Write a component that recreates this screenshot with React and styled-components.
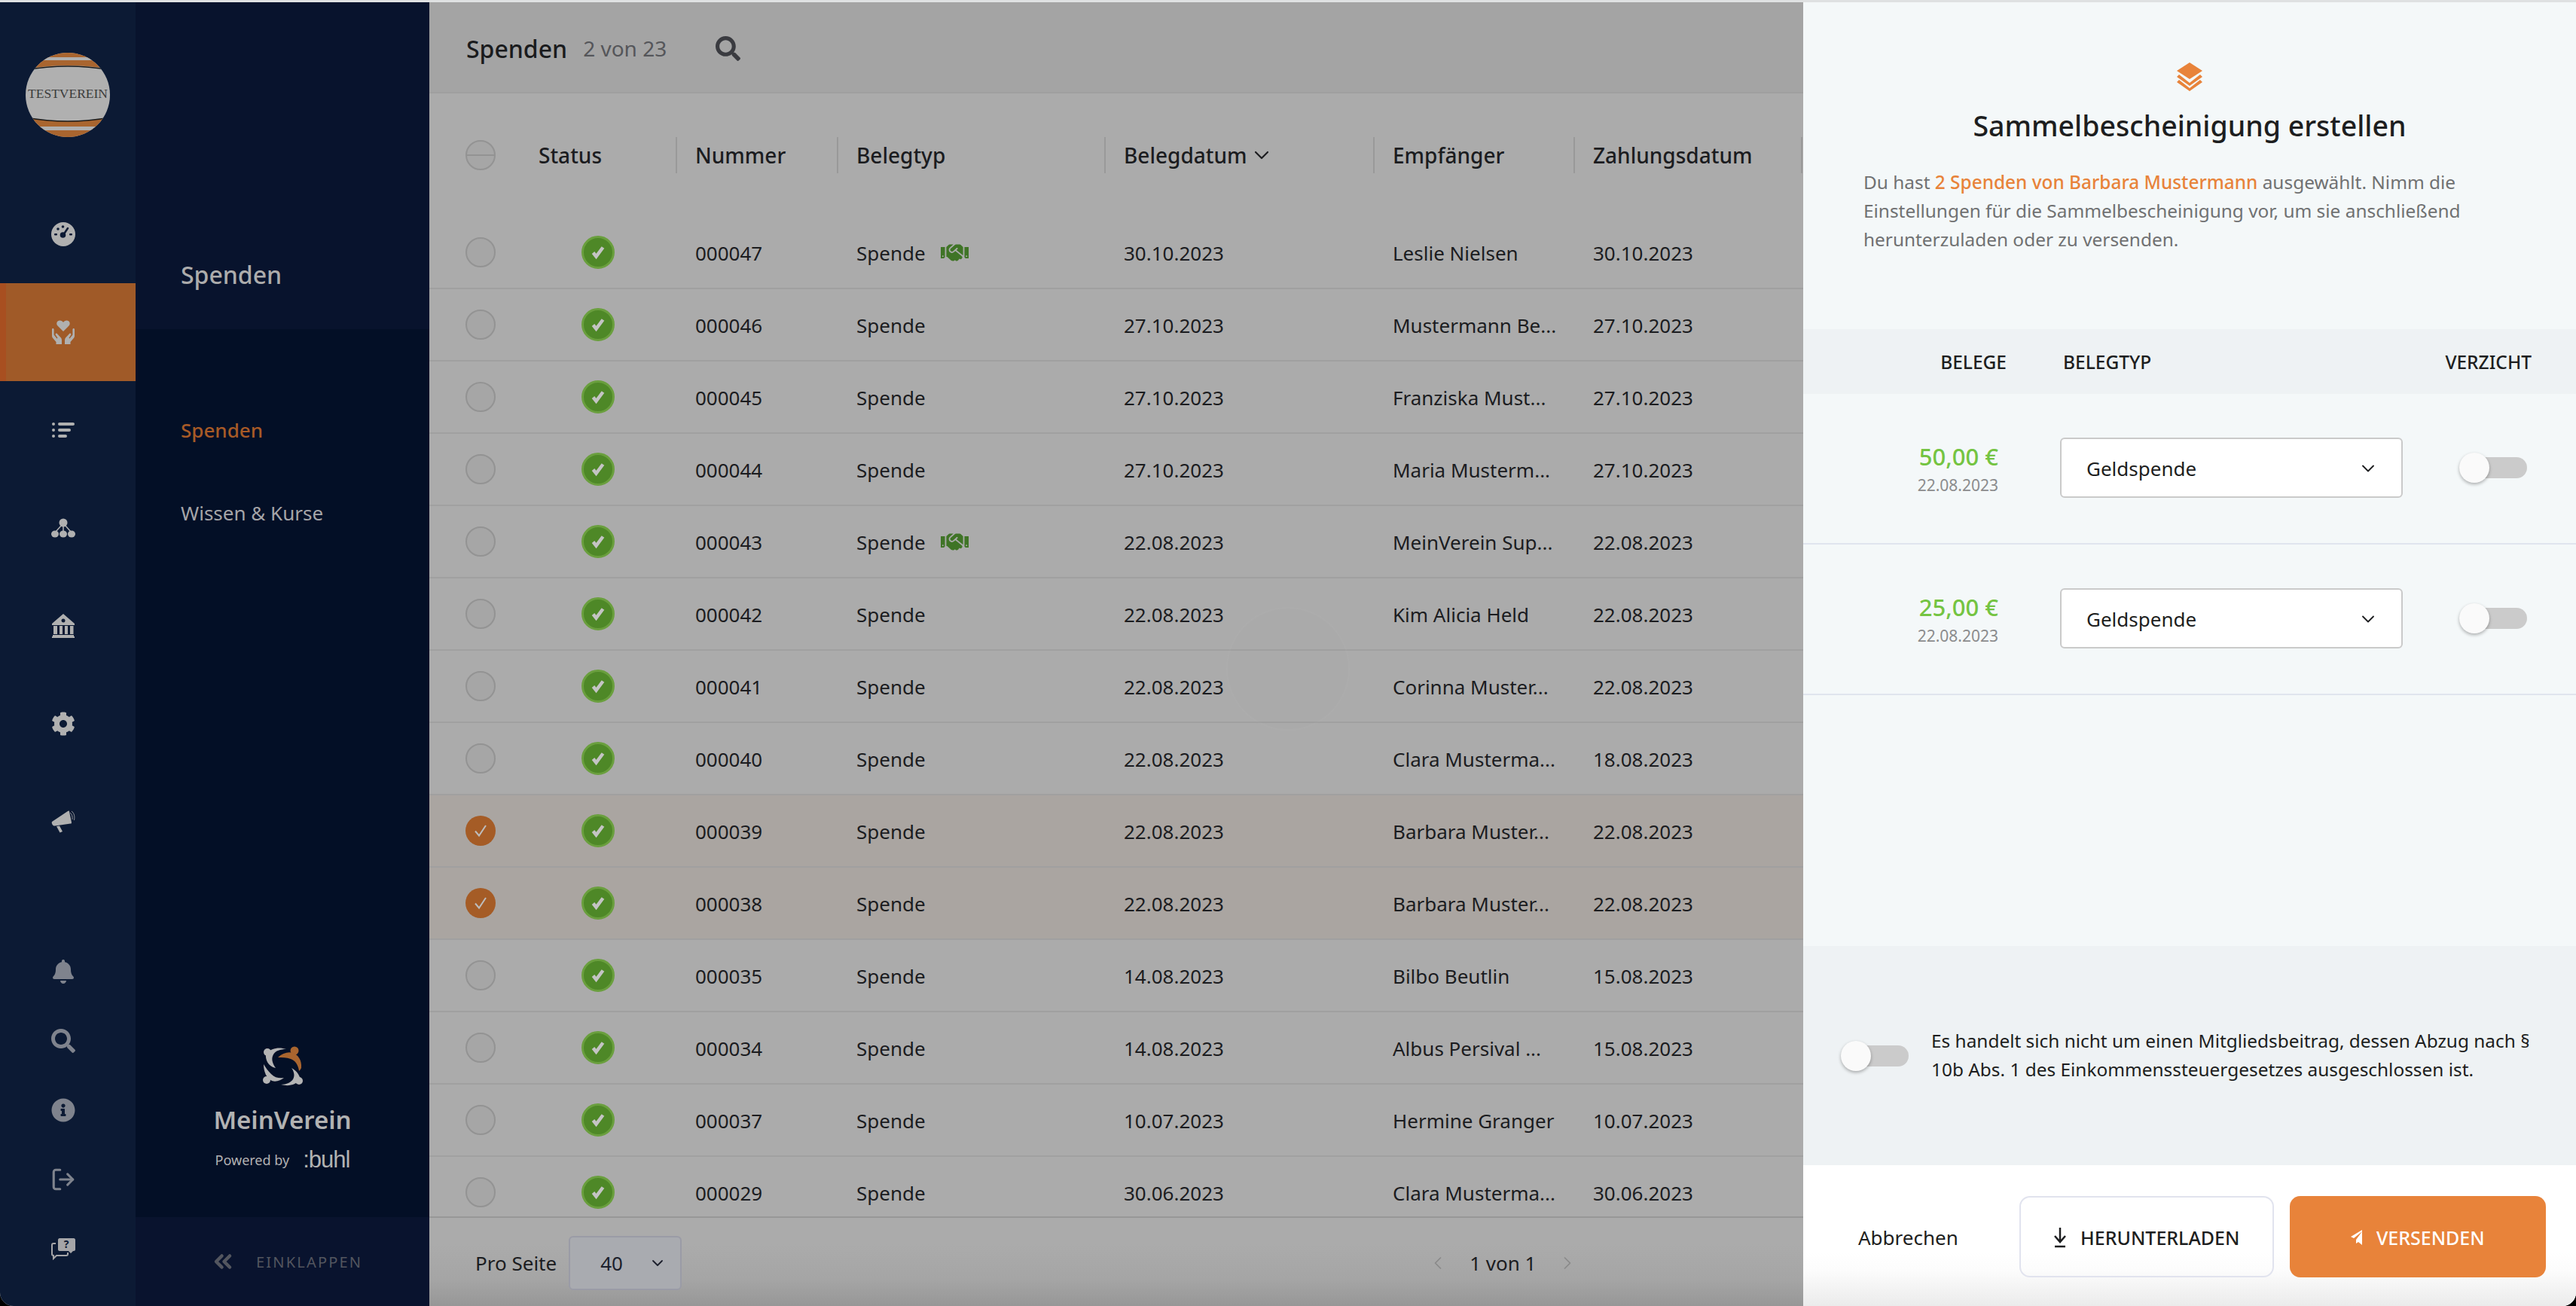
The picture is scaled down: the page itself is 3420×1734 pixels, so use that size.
import React from "react";
import styled, { createGlobalStyle } from "styled-components";
import { FaCog, FaBell, FaSearch, FaInfoCircle, FaHandshake } from "react-icons/fa";
import { LogOut, ChevronDown, ChevronLeft, ChevronRight, ChevronsLeft } from "lucide-react";

const rows = [
  ["000047", true, "30.10.2023", "Leslie Nielsen", "30.10.2023"],
  ["000046", false, "27.10.2023", "Mustermann Be...", "27.10.2023"],
  ["000045", false, "27.10.2023", "Franziska Must...", "27.10.2023"],
  ["000044", false, "27.10.2023", "Maria Musterm...", "27.10.2023"],
  ["000043", true, "22.08.2023", "MeinVerein Sup...", "22.08.2023"],
  ["000042", false, "22.08.2023", "Kim Alicia Held", "22.08.2023"],
  ["000041", false, "22.08.2023", "Corinna Muster...", "22.08.2023"],
  ["000040", false, "22.08.2023", "Clara Musterma...", "18.08.2023"],
  ["000039", false, "22.08.2023", "Barbara Muster...", "22.08.2023", true],
  ["000038", false, "22.08.2023", "Barbara Muster...", "22.08.2023", true],
  ["000035", false, "14.08.2023", "Bilbo Beutlin", "15.08.2023"],
  ["000034", false, "14.08.2023", "Albus Persival ...", "15.08.2023"],
  ["000037", false, "10.07.2023", "Hermine Granger", "10.07.2023"],
  ["000029", false, "30.06.2023", "Clara Musterma...", "30.06.2023"],
];

const GlobalStyle = createGlobalStyle`
  html, body { margin: 0; padding: 0; background: #000; }
  * { box-sizing: border-box; }
  body { font-family: "Noto Sans", "Open Sans", sans-serif; }
`;

const Page = styled.div`
  width: 3420px;
  height: 1734px;
  padding-top: 3px;
  background: #dfe1e2;
  display: grid;
  grid-template-columns: 180px 390px 1824px 1026px;
  border-radius: 0 0 18px 18px;
  overflow: hidden;
`;

const Rail = styled.nav`
  background: #0c1a34;
  display: flex;
  flex-direction: column;
`;

const LogoBox = styled.div`
  height: 243px;
  padding: 67px 0 0 34px;
`;

const RailItem = styled.div`
  height: ${(p) => (p.$small ? "92px" : "130px")};
  display: flex;
  align-items: center;
  justify-content: center;
  padding-right: 20px;
  font-size: 32px;
  color: ${(p) => (p.$dim ? "#7f838d" : "#b0b0b0")};
  background: ${(p) => (p.$active ? "#a05a28" : "transparent")};
  border-left: 8px solid ${(p) => (p.$active ? "#a84f20" : "transparent")};
`;

const RailBottom = styled.div`
  margin-top: auto;
  padding-bottom: 30px;
`;

const Side = styled.aside`
  background: #030f26;
  display: flex;
  flex-direction: column;
`;

const SideHead = styled.div`
  height: 434px;
  background: #08132d;
  padding: 340px 0 0 60px;
  font-size: 32px;
  line-height: 44px;
  font-weight: 500;
  color: #acacac;
`;

const SideNav = styled.div`
  padding: 116px 0 0 60px;
  display: flex;
  flex-direction: column;
  gap: 74px;
`;

const SideLink = styled.a`
  font-size: 26px;
  line-height: 36px;
  font-weight: ${(p) => (p.$active ? 500 : 400)};
  color: ${(p) => (p.$active ? "#a85a26" : "#a5a5a8")};
`;

const Brand = styled.div`
  margin-top: auto;
  padding-bottom: 61px;
  display: flex;
  flex-direction: column;
  align-items: center;
`;

const BrandName = styled.div`
  margin-top: 19px;
  font-size: 33px;
  line-height: 50px;
  font-weight: 600;
  color: #b2b2b2;
`;

const PoweredRow = styled.div`
  display: flex;
  align-items: center;
  gap: 18px;
  color: #b2b2b2;
  font-size: 18px;
  line-height: 30px;
  margin-top: 13px;
`;

const Buhl = styled.span`
  font-family: "Liberation Sans", sans-serif;
  font-size: 31px;
  letter-spacing: -1px;
`;

const Collapse = styled.div`
  height: 118px;
  background: #09132e;
  display: flex;
  align-items: center;
  padding-left: 98px;
  gap: 26px;
  color: #53565f;
  font-size: 20px;
  letter-spacing: 2.2px;
`;

const Main = styled.main`
  position: relative;
  background: #ababab;
  display: flex;
  flex-direction: column;
  min-height: 0;
  overflow: hidden;
`;

const Ghost = styled.div`
  position: absolute;
  left: 1058px;
  top: 803px;
  width: 164px;
  height: 164px;
  border-radius: 50%;
  border: 2px solid rgba(255, 255, 255, 0.02);
  background: rgba(0, 0, 0, 0.004);
`;

const MainHead = styled.header`
  height: 121px;
  flex-shrink: 0;
  background: #a4a4a4;
  border-bottom: 2px solid #9f9f9f;
  display: flex;
  align-items: center;
  padding: 3px 0 0 49px;
`;

const MainTitle = styled.h1`
  margin: 0;
  font-size: 32px;
  font-weight: 500;
  color: #1a1b1d;
`;

const MainCount = styled.span`
  margin-left: 21px;
  font-size: 28px;
  color: #55565a;
`;

const SearchBtn = styled.span`
  margin-left: 65px;
  display: flex;
  font-size: 33px;
  color: #3a3b40;
`;

const Table = styled.div`
  flex: 1;
  min-height: 0;
  overflow: hidden;
`;

const gridCols = "145px 182px 214px 355px 357px 266px 302px 3px";

const HeadRow = styled.div`
  height: 164px;
  display: grid;
  grid-template-columns: ${gridCols};
  align-items: center;
`;

const HeadCell = styled.div`
  height: 48px;
  display: flex;
  align-items: center;
  gap: 3px;
  padding-left: 24px;
  border-left: 2px solid #999;
  font-size: 28px;
  font-weight: 500;
  color: #1b1c1f;
  &:nth-child(2) { border-left: none; padding-left: 0; }
`;

const Row = styled.div`
  height: 96px;
  display: grid;
  grid-template-columns: ${gridCols};
  align-items: center;
  border-bottom: 2px solid #a0a0a0;
  background: ${(p) => (p.$selected ? "#aaa5a1" : "transparent")};
`;

const Cell = styled.div`
  display: flex;
  align-items: center;
  gap: 20px;
  padding: 1px 0 0 26px;
  font-size: 26px;
  color: #1b1c1f;
  white-space: nowrap;
`;

const CheckCell = styled.div`
  padding-left: 48px;
  display: flex;
`;

const Check = styled.span`
  width: 40px;
  height: 40px;
  border-radius: 50%;
  display: flex;
  align-items: center;
  justify-content: center;
  background: ${(p) => (p.$checked ? "#a55c26" : "#a6a6a6")};
  border: ${(p) => (p.$checked ? "none" : "2px solid #939393")};
`;

const HeadDash = styled.span`
  width: 100%;
  height: 2px;
  background: #939393;
`;

const StatusCell = styled.div`
  padding-left: 57px;
  display: flex;
`;

const Status = styled.span`
  width: 44px;
  height: 44px;
  border-radius: 50%;
  background: #4e8827;
  border: 3px solid #6a9f3e;
  display: flex;
  align-items: center;
  justify-content: center;
`;

const MainFooter = styled.footer`
  height: 119px;
  flex-shrink: 0;
  border-top: 2px solid #979797;
  background: linear-gradient(#ababab 30%, #a5a5a5 70%, #979797);
  display: flex;
  align-items: center;
  padding: 3px 0 0 61px;
  font-size: 26px;
  color: #1b1c1f;
`;

const PageSize = styled.div`
  margin-left: 16px;
  width: 150px;
  height: 72px;
  border: 2px solid #9a9ba6;
  border-radius: 6px;
  background: #a9abb0;
  display: flex;
  align-items: center;
  justify-content: space-between;
  padding: 0 18px 0 40px;
  color: #1c1f2c;
`;

const Pager = styled.div`
  margin-left: 990px;
  display: flex;
  align-items: center;
  gap: 28px;
  color: #8a8a8a;
`;

const PagerText = styled.span`
  color: #1b1c1f;
`;

const Panel = styled.section`
  background: #f4f8f9;
  display: flex;
  flex-direction: column;
  min-height: 0;
`;

const Intro = styled.div`
  height: 434px;
  padding: 80px 0 0 80px;
  display: flex;
  flex-direction: column;
`;

const IntroIcon = styled.div`
  align-self: center;
  margin-left: -80px;
  display: flex;
`;

const PanelTitle = styled.h2`
  margin: 18px 0 0 -80px;
  text-align: center;
  font-size: 37.5px;
  line-height: 56px;
  font-weight: 500;
  color: #1d1e20;
`;

const IntroText = styled.p`
  margin: 28px 0 0;
  width: 840px;
  font-size: 24.4px;
  line-height: 38px;
  color: #707172;
`;

const Strong = styled.span`
  color: #e8833a;
  font-weight: 500;
`;

const gridPanel = "270px 455px minmax(0, 1fr)";

const ColHead = styled.div`
  height: 86px;
  flex-shrink: 0;
  background: #eef2f4;
  display: grid;
  grid-template-columns: ${gridPanel};
  align-items: center;
  column-gap: 75px;
  padding-right: 59px;
  font-size: 24.5px;
  font-weight: 500;
  color: #1d1e20;
`;

const ColRight = styled.span`
  justify-self: end;
  white-space: nowrap;
`;

const DocRow = styled.div`
  height: 200px;
  flex-shrink: 0;
  border-bottom: 2px solid #e0e5ee;
  display: grid;
  grid-template-columns: ${gridPanel};
  align-items: center;
  column-gap: 71px;
  padding-bottom: 2px;
`;

const Amount = styled.div`
  text-align: right;
  padding: 5px 11px 0 0;
  font-size: 31px;
  line-height: 40px;
  font-weight: 500;
  color: #74c442;
`;

const AmountDate = styled.div`
  font-size: 21px;
  line-height: 36px;
  font-weight: 400;
  color: #8b8c8d;
`;

const Select = styled.div`
  height: 80px;
  border: 2px solid #cacaca;
  border-radius: 6px;
  background: #fff;
  display: flex;
  align-items: center;
  justify-content: space-between;
  padding: 2px 30px 0 33px;
  font-size: 26px;
  color: #1d1e20;
`;

const ToggleWrap = styled.div`
  margin-left: ${(p) => p.$ml || "0px"};
  width: 90px;
  height: 40px;
  position: relative;
  flex-shrink: 0;
`;

const Track = styled.span`
  position: absolute;
  left: 5px;
  top: 6px;
  width: 85px;
  height: 28px;
  border-radius: 14px;
  background: #cbcbcb;
`;

const Knob = styled.span`
  position: absolute;
  left: 0;
  top: 0;
  width: 40px;
  height: 40px;
  border-radius: 50%;
  background: #fafafa;
  box-shadow: 0 2px 4px rgba(0, 0, 0, 0.3);
`;

const Spacer = styled.div`
  flex: 1;
`;

const Declaration = styled.div`
  height: 291px;
  flex-shrink: 0;
  background: #eef2f4;
  display: flex;
  align-items: center;
  padding-left: 50px;
  gap: 30px;
`;

const DeclText = styled.p`
  margin: -1px 0 0;
  width: 806px;
  font-size: 24.4px;
  line-height: 38.5px;
  color: #1d1e20;
`;

const PanelFooter = styled.footer`
  height: 187px;
  flex-shrink: 0;
  background: linear-gradient(#fff 62%, #fcfcfc 75%, #ebebeb);
  display: flex;
  align-items: flex-start;
  padding: 41px 40px 0 73px;
`;

const Cancel = styled.span`
  font-size: 26px;
  line-height: 110px;
  color: #1d1e20;
  margin-right: 81px;
`;

const Button = styled.button`
  width: ${(p) => (p.$primary ? "340px" : "338px")};
  height: 108px;
  margin-left: ${(p) => (p.$primary ? "21px" : "0")};
  border-radius: 14px;
  border: ${(p) => (p.$primary ? "none" : "2px solid #e1e3ee")};
  background: ${(p) => (p.$primary ? "#e8833a" : "transparent")};
  color: ${(p) => (p.$primary ? "#fff" : "#1d1e20")};
  font-family: inherit;
  font-size: 25px;
  font-weight: 500;
  display: flex;
  align-items: center;
  justify-content: center;
  gap: 18px;
  padding: 2px 0 0;
`;

const TickMark = () => (
  <svg width="22" height="22" viewBox="0 0 22 22">
    <path d="M4 11.5l5 6L18 4" fill="none" stroke="#bdbdbd" strokeWidth="2" />
  </svg>
);

const StatusTick = () => (
  <svg width="20" height="20" viewBox="0 0 20 20">
    <path d="M3.5 10.5l4 5L16.5 3.5" fill="none" stroke="#c4c4c4" strokeWidth="4.5" />
  </svg>
);

const TestLogo = () => (
  <svg width="112" height="112" viewBox="0 0 112 112">
    <defs>
      <clipPath id="logoClip"><circle cx="56" cy="56" r="56" /></clipPath>
    </defs>
    <g clipPath="url(#logoClip)">
      <rect width="112" height="112" fill="#b0b0b0" />
      <path d="M0 22 Q56 12 112 22 L112 0 L0 0Z" fill="#a9652f" />
      <rect y="6" width="112" height="4" fill="#b0b0b0" />
      <path d="M0 23 Q56 13 112 23" fill="none" stroke="#1c1c1c" strokeWidth="1.5" />
      <path d="M0 86 Q56 96 112 86 L112 112 L0 112Z" fill="#a9652f" />
      <path d="M0 86 Q56 96 112 86" fill="none" stroke="#1c1c1c" strokeWidth="1.5" />
      <rect y="98" width="112" height="5" fill="#b0b0b0" />
      <text x="56" y="60" textAnchor="middle" fontFamily="Liberation Serif" fontSize="17.5" fill="#3c3c3c">TESTVEREIN</text>
    </g>
  </svg>
);

const Gauge = () => (
  <svg width="32" height="32" viewBox="0 0 32 32">
    <circle cx="16" cy="16" r="16" fill="currentColor" />
    <g fill="#0c1a34">
      <circle cx="15.5" cy="6" r="1.8" />
      <circle cx="9" cy="9" r="1.8" />
      <rect x="4" y="15" width="4" height="2.6" rx="1" />
      <rect x="24" y="15" width="4" height="2.6" rx="1" />
      <circle cx="15.5" cy="17" r="3.8" />
    </g>
    <path d="M16 17l6-9" stroke="#0c1a34" strokeWidth="2.5" strokeLinecap="round" />
  </svg>
);

const HandHalf = "M1 12.5C1 11.5 1.6 11 2.3 11S3.6 11.6 3.6 12.5V19.5L7.5 24.5 8.5 23.7 5.7 19.5C5 18.3 6.7 16.8 7.8 18L12.5 23C13.5 24 14 25.5 14 27V32H6.5V29L1.8 23.5C1.2 22.8 1 22 1 21Z";

const HandsHeart = () => (
  <svg width="32" height="32" viewBox="0 0 32 32" fill="currentColor">
    <path d="M16 15L8.5 7.5C6 5 7.5 .5 11.5 .5 13.5 .5 15 1.5 16 3 17 1.5 18.5 .5 20.5 .5 24.5 .5 26 5 23.5 7.5Z" />
    <path d={HandHalf} />
    <path d={HandHalf} transform="matrix(-1 0 0 1 32 0)" />
  </svg>
);

const ListIcon = () => (
  <svg width="30" height="20" viewBox="0 0 30 20" fill="currentColor">
    <circle cx="2" cy="2" r="2" />
    <circle cx="2" cy="10" r="2" />
    <circle cx="2" cy="18" r="2" />
    <rect x="8" width="22" height="4" rx="2" />
    <rect x="8" y="8" width="17" height="4" rx="2" />
    <rect x="8" y="16" width="12" height="4" rx="2" />
  </svg>
);

const Network = () => (
  <svg width="32" height="26" viewBox="0 0 32 26" fill="currentColor" stroke="currentColor">
    <circle cx="16" cy="6" r="5.5" stroke="none" />
    <ellipse cx="5" cy="21" rx="5" ry="4.5" stroke="none" />
    <ellipse cx="16" cy="21" rx="5" ry="4.5" stroke="none" />
    <ellipse cx="27" cy="21" rx="5" ry="4.5" stroke="none" />
    <path d="M16 8v10M14 9l-8 9M18 9l8 9" fill="none" strokeWidth="1.5" />
  </svg>
);

const Bank = () => (
  <svg width="30" height="32" viewBox="0 0 30 32" fill="currentColor">
    <path fillRule="evenodd" d="M15 0L0 13v2h30v-2zM15 6.5a2.5 2.5 0 1 1 0 5 2.5 2.5 0 0 1 0-5z" />
    <path d="M2 16h5v11H2zM10 16h4v11h-4zM17 16h4v11h-4zM24 16h4.5v11H24z" />
    <path d="M1 28h28v2h1v2H0v-2h1z" />
  </svg>
);

const Megaphone = () => (
  <svg width="32" height="30" viewBox="0 0 32 30" fill="currentColor">
    <path d="M1 15L22 1C23 0 24 .5 24 1.5L27 16C27 17 26.5 18 25.5 17.5L5 20.5C2 21 0 17 1 15z" />
    <path d="M7 21L11 20.5 15 28 11.5 29.5z" />
    <path d="M25 3C27.5 5 28.5 8 28 12M27 1C30.5 3.5 31.5 8 30.5 13" fill="none" stroke="currentColor" strokeWidth=".8" />
  </svg>
);

const HelpChat = () => (
  <svg width="32" height="30" viewBox="0 0 32 30">
    <path d="M11 1h19c1 0 2 1 2 2v13c0 1-1 2-2 2h-1l-3 3-3-3H11c-1 0-2-1-2-2V3c0-1 1-2 2-2z" fill="#a5a5a8" />
    <path d="M6 8H3c-1 0-2 1-2 2v12c0 1 1 2 2 2v4l4-4h13c1 0 2-1 2-2v-2" fill="none" stroke="#a5a5a8" strokeWidth="2" />
    <text x="20" y="14" textAnchor="middle" fontFamily="Noto Sans" fontWeight="700" fontSize="14" fill="#0c1a34">?</text>
  </svg>
);

const Layers = () => (
  <svg width="34" height="38" viewBox="0 0 34 38" fill="#e8833a">
    <path d="M17 0l17 11-17 11L0 11z" />
    <path d="M3 16l14 11 14-11 3 3-17 12L0 19z" />
    <path d="M3 23l14 11 14-11 3 3-17 12L0 26z" />
  </svg>
);

const DownloadIcon = () => (
  <svg width="18" height="28" viewBox="0 0 18 28" fill="none" stroke="#1d1e20" strokeWidth="2.5">
    <path d="M9 1v18M2 12l7 8 7-8M2 26h14" />
  </svg>
);

const SendIcon = () => (
  <svg width="16" height="22" viewBox="0 0 16 22" fill="#fff">
    <path d="M15 1v20l-5-4-3 2v-5L15 3 4 12 0 10z" />
  </svg>
);

const BrandMark = () => (
  <svg width="56" height="54" viewBox="0 0 56 54">
    <g fill="#b4b4b4">
      <circle cx="8" cy="8" r="5" />
      <path d="M6 10c8-8 18-9 27-6-8 0-14 2-17 7-3 5-2 11 3 18-10-2-14-11-13-19z" />
      <circle cx="7" cy="45" r="5" />
      <path d="M3 24c0 10 4 19 11 22 6 2 12-1 16-4-6 1-12 0-17-5-4-4-7-8-10-13z" />
      <circle cx="50" cy="46" r="5" />
      <path d="M52 44c-6 7-15 10-26 7 8 0 13-3 16-7 3-5 1-11-2-15 6 3 10 8 12 15z" />
    </g>
    <circle cx="44" cy="6" r="5.5" fill="#a9652f" />
    <path d="M22 15c6-6 14-8 20-6 6 2 12 9 11 20-1 2-2 3-3 4-1-8-5-14-11-16-6-2-11-2-17-2z" fill="#a9652f" />
  </svg>
);

function Toggle({ ml }) {
  return (
    <ToggleWrap $ml={ml}>
      <Track />
      <Knob />
    </ToggleWrap>
  );
}

function DonationRow({ amount }) {
  return (
    <DocRow>
      <Amount>
        {amount}
        <AmountDate>22.08.2023</AmountDate>
      </Amount>
      <Select>
        Geldspende
        <ChevronDown size={28} strokeWidth={1.6} />
      </Select>
      <Toggle ml="4px" />
    </DocRow>
  );
}

export default function App() {
  return (
    <>
      <GlobalStyle />
      <Page>
        <Rail>
          <LogoBox><TestLogo /></LogoBox>
          <RailItem><Gauge /></RailItem>
          <RailItem $active><HandsHeart /></RailItem>
          <RailItem><ListIcon /></RailItem>
          <RailItem><Network /></RailItem>
          <RailItem><Bank /></RailItem>
          <RailItem><FaCog /></RailItem>
          <RailItem><Megaphone /></RailItem>
          <RailBottom>
            <RailItem $small $dim><FaBell /></RailItem>
            <RailItem $small $dim><FaSearch /></RailItem>
            <RailItem $small $dim><FaInfoCircle /></RailItem>
            <RailItem $small $dim><LogOut size={34} strokeWidth={2.2} /></RailItem>
            <RailItem $small $dim><HelpChat /></RailItem>
          </RailBottom>
        </Rail>

        <Side>
          <SideHead>Spenden</SideHead>
          <SideNav>
            <SideLink $active>Spenden</SideLink>
            <SideLink>Wissen &amp; Kurse</SideLink>
          </SideNav>
          <Brand>
            <BrandMark />
            <BrandName>MeinVerein</BrandName>
            <PoweredRow>
              Powered by
              <Buhl>:buhl</Buhl>
            </PoweredRow>
          </Brand>
          <Collapse>
            <ChevronsLeft size={36} strokeWidth={3} />
            EINKLAPPEN
          </Collapse>
        </Side>

        <Main>
          <MainHead>
            <MainTitle>Spenden</MainTitle>
            <MainCount>2 von 23</MainCount>
            <SearchBtn><FaSearch /></SearchBtn>
          </MainHead>
          <Table>
            <HeadRow>
              <CheckCell><Check><HeadDash /></Check></CheckCell>
              <HeadCell>Status</HeadCell>
              <HeadCell>Nummer</HeadCell>
              <HeadCell>Belegtyp</HeadCell>
              <HeadCell>Belegdatum<ChevronDown size={32} strokeWidth={1.6} /></HeadCell>
              <HeadCell>Empfänger</HeadCell>
              <HeadCell>Zahlungsdatum</HeadCell>
              <HeadCell />
            </HeadRow>
            {rows.map((r) => (
              <Row key={r[0]} $selected={r[5]}>
                <CheckCell>
                  <Check $checked={r[5]}>{r[5] && <TickMark />}</Check>
                </CheckCell>
                <StatusCell>
                  <Status><StatusTick /></Status>
                </StatusCell>
                <Cell>{r[0]}</Cell>
                <Cell>
                  Spende
                  {r[1] && <FaHandshake size={37} color="#3f7426" />}
                </Cell>
                <Cell>{r[2]}</Cell>
                <Cell>{r[3]}</Cell>
                <Cell>{r[4]}</Cell>
              </Row>
            ))}
          </Table>
          <MainFooter>
            Pro Seite
            <PageSize>
              40
              <ChevronDown size={24} strokeWidth={1.8} />
            </PageSize>
            <Pager>
              <ChevronLeft size={28} strokeWidth={1.5} />
              <PagerText>1 von 1</PagerText>
              <ChevronRight size={28} strokeWidth={1.5} />
            </Pager>
          </MainFooter>
          <Ghost />
        </Main>

        <Panel>
          <Intro>
            <IntroIcon><Layers /></IntroIcon>
            <PanelTitle>Sammelbescheinigung erstellen</PanelTitle>
            <IntroText>
              Du hast <Strong>2 Spenden von Barbara Mustermann</Strong> ausgewählt. Nimm die
              Einstellungen für die Sammelbescheinigung vor, um sie anschließend
              herunterzuladen oder zu versenden.
            </IntroText>
          </Intro>
          <ColHead>
            <ColRight>BELEGE</ColRight>
            <span>BELEGTYP</span>
            <ColRight>VERZICHT</ColRight>
          </ColHead>
          <DonationRow amount="50,00 €" />
          <DonationRow amount="25,00 €" />
          <Spacer />
          <Declaration>
            <Toggle />
            <DeclText>
              Es handelt sich nicht um einen Mitgliedsbeitrag, dessen Abzug nach § 10b Abs. 1 des
              Einkommenssteuergesetzes ausgeschlossen ist.
            </DeclText>
          </Declaration>
          <PanelFooter>
            <Cancel>Abbrechen</Cancel>
            <Button><DownloadIcon />HERUNTERLADEN</Button>
            <Button $primary><SendIcon />VERSENDEN</Button>
          </PanelFooter>
        </Panel>
      </Page>
    </>
  );
}
